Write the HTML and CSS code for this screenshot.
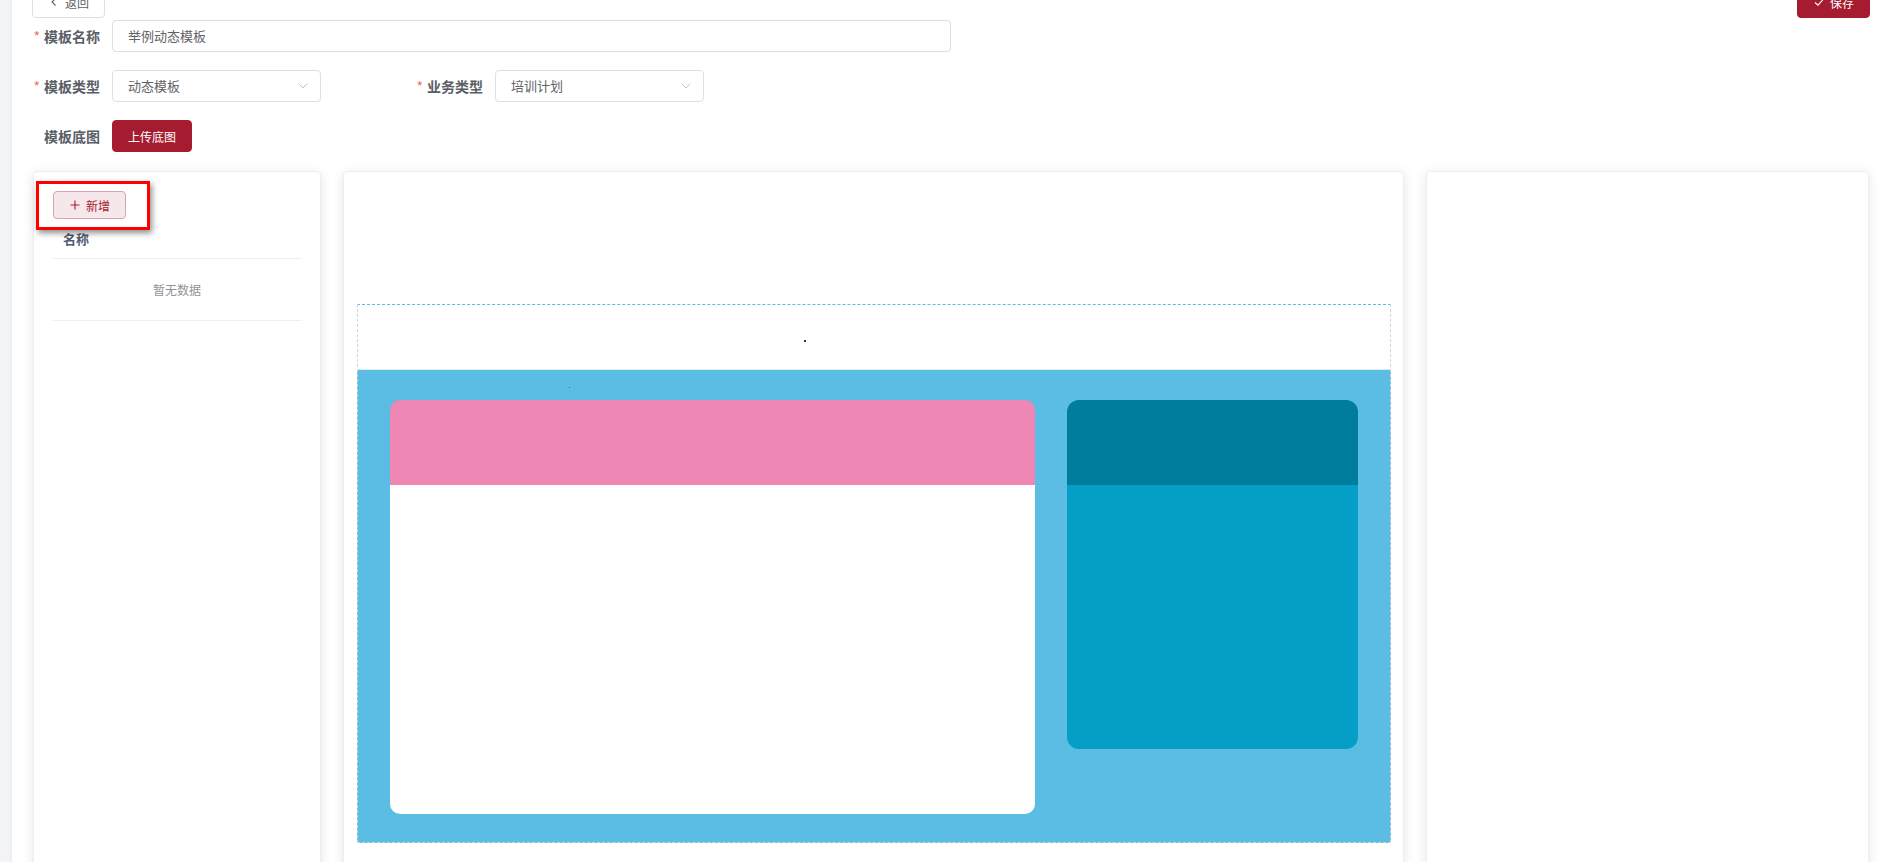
FILE: index.html
```html
<!DOCTYPE html>
<html>
<head>
    <title>模板编辑</title>
    <link rel="stylesheet" href="styles.css">
</head>
<body>
    <div class="main">
        <div class="top-bar">
            <button class="btn btn-default">
                <svg class="btn-icon" viewBox="0 0 12 12"><polyline points="7.5,2.5 4,6 7.5,9.5" fill="none" stroke="#606266" stroke-width="1.1"/></svg>
                <span>返回</span>
            </button>
            <button class="btn btn-primary">
                <svg class="btn-icon" viewBox="0 0 12 12"><polyline points="2,6.5 5,9.2 10.5,3" fill="none" stroke="#fff" stroke-width="1.1"/></svg>
                <span>保存</span>
            </button>
        </div>

        <form class="tpl-form">
            <div class="form-row">
                <div class="form-item">
                    <label class="form-label required">模板名称</label>
                    <div class="input input-long">举例动态模板</div>
                </div>
            </div>
            <div class="form-row">
                <div class="form-item">
                    <label class="form-label required">模板类型</label>
                    <div class="input select">
                        <span>动态模板</span>
                        <svg class="arrow" viewBox="0 0 10 6"><polyline points="0.5,0.5 5,5 9.5,0.5" fill="none" stroke="#c0c4cc" stroke-width="1"/></svg>
                    </div>
                </div>
                <div class="form-item">
                    <label class="form-label required">业务类型</label>
                    <div class="input select">
                        <span>培训计划</span>
                        <svg class="arrow" viewBox="0 0 10 6"><polyline points="0.5,0.5 5,5 9.5,0.5" fill="none" stroke="#c0c4cc" stroke-width="1"/></svg>
                    </div>
                </div>
            </div>
            <div class="form-row">
                <div class="form-item">
                    <label class="form-label">模板底图</label>
                    <button type="button" class="btn btn-primary">上传底图</button>
                </div>
            </div>
        </form>

        <div class="panels">
            <div class="card card-list">
                <button class="btn btn-plain btn-mini">
                    <svg class="btn-icon" viewBox="0 0 12 12"><path d="M6 1.5v9M1.5 6h9" stroke="#a51c30" stroke-width="1.1"/></svg>
                    <span>新增</span>
                </button>
                <table class="field-table">
                    <thead>
                        <tr><th>名称</th></tr>
                    </thead>
                    <tbody>
                        <tr><td class="empty">暂无数据</td></tr>
                    </tbody>
                </table>
                <div class="mark-box"></div>
            </div>

            <div class="card card-canvas">
                <div class="canvas">
                    <div class="canvas-head">
                        <i class="dot dot-head"></i>
                    </div>
                    <div class="canvas-body">
                        <i class="dot dot-body"></i>
                        <div class="block block-main">
                            <div class="block-head"></div>
                            <div class="block-content"></div>
                        </div>
                        <div class="block block-side">
                            <div class="block-head"></div>
                            <div class="block-content"></div>
                        </div>
                    </div>
                </div>
            </div>

            <div class="card card-props"></div>
        </div>
    </div>
</body>
</html>
```

FILE: styles.css
```css
html, body {
    height: 100%;
    overflow: hidden;
}
body {
    margin: 0;
    background: #f2f3f7;
    font-family: 'Noto Sans CJK SC', 'Noto Sans', sans-serif;
    color: #606266;
}
.main {
    display: flow-root;
    margin-left: 12px;
    height: 100%;
    background: #fff;
    box-shadow: 0 0 4px rgba(0,0,0,0.06);
    padding: 0 15px 0 20px;
    box-sizing: border-box;
}

/* buttons */
.btn {
    display: inline-flex;
    align-items: center;
    height: 32px;
    padding: 0 15px;
    border: 1px solid #dcdfe6;
    border-radius: 4px;
    background: #fff;
    color: #606266;
    font-family: inherit;
    font-size: 12px;
    cursor: pointer;
    box-sizing: border-box;
}
.btn-icon {
    width: 12px;
    height: 12px;
    margin-right: 5px;
}
.btn-primary {
    background: #a51c30;
    border-color: #a51c30;
    color: #fff;
}
.btn-plain {
    background: #f6e8ea;
    border-color: #dba4ac;
    color: #a51c30;
}
.btn-mini {
    height: 28px;
}

.top-bar {
    display: flex;
    justify-content: space-between;
    margin-top: -14px;
}

/* form */
.tpl-form {
    margin-top: 2px;
}
.form-row {
    display: flex;
    gap: 94px;
}
.form-item {
    display: flex;
    align-items: center;
    margin-bottom: 18px;
}
.form-label {
    width: 80px;
    padding-right: 12px;
    box-sizing: border-box;
    text-align: right;
    font-size: 14px;
    font-weight: bold;
    color: #5a5e66;
    line-height: 32px;
}
.form-label.required::before {
    content: '*';
    color: #f56c6c;
    margin-right: 4px;
    font-weight: normal;
}
.input {
    height: 32px;
    border: 1px solid #dcdfe6;
    border-radius: 4px;
    padding: 0 15px;
    box-sizing: border-box;
    font-size: 13px;
    color: #606266;
    line-height: 30px;
}
.input-long {
    width: 839px;
}
.select {
    width: 209px;
    display: flex;
    align-items: center;
    justify-content: space-between;
    padding-right: 12px;
}
.arrow {
    width: 10px;
    height: 6px;
}

/* panels */
.panels {
    display: flex;
    gap: 22px;
    margin-left: 1px;
    margin-top: 1px;
}
.card {
    position: relative;
    height: 720px;
    background: #fff;
    border: 1px solid #ebeef5;
    border-radius: 4px;
    box-shadow: 0 2px 12px 0 rgba(0,0,0,0.1);
    box-sizing: border-box;
}
.card-list {
    width: 288px;
    padding: 19px;
}
.card-canvas {
    width: 1061px;
    padding: 132px 12px 0 13px;
}
.card-props {
    width: 443px;
}

.field-table {
    width: 100%;
    border-collapse: collapse;
    font-size: 13px;
}
.field-table th {
    height: 39px;
    padding: 0 10px;
    text-align: left;
    font-weight: bold;
    color: #515a6e;
    border-bottom: 1px solid #ebeef5;
}
.field-table td.empty {
    height: 59px;
    text-align: center;
    font-size: 12px;
    color: #909399;
    border-bottom: 1px solid #ebeef5;
}
.mark-box {
    position: absolute;
    left: 2px;
    top: 9px;
    width: 114px;
    height: 49px;
    border: 3px solid #f00;
    box-sizing: border-box;
    box-shadow: 2px 3px 6px rgba(0,0,0,0.45);
}

/* template canvas */
.canvas {
    position: relative;
    height: 539px;
    border: 1px dashed #d4d4d4;
    border-top-color: #5bbce4;
    box-sizing: border-box;
    background: linear-gradient(to bottom, #fff 66px, #5bbce4 66px);
    background-origin: border-box;
}
.canvas-head {
    height: 65px;
    border-bottom: 1px solid #d8eef8;
    box-sizing: border-box;
}
.canvas-body {
    display: flex;
    align-items: flex-start;
    gap: 32px;
    padding: 30px 32px;
}
.dot {
    position: absolute;
    display: block;
    width: 2px;
    height: 2px;
}
.dot-head {
    left: 446px;
    top: 35px;
    background: #333;
}
.dot-body {
    left: 211px;
    top: 82px;
    width: 1px;
    height: 1px;
    background: #2a6f96;
}
.block {
    border-radius: 10px;
    overflow: hidden;
}
.block-head {
    height: 85px;
}
.block-main {
    width: 646px;
}
.block-main .block-head {
    background: #ee87b4;
}
.block-main .block-content {
    height: 329px;
    background: #fff;
}
.block-side {
    width: 291px;
    border-radius: 12px;
}
.block-side .block-head {
    background: #007c9c;
}
.block-side .block-content {
    height: 264px;
    background: #059ec6;
}
```
